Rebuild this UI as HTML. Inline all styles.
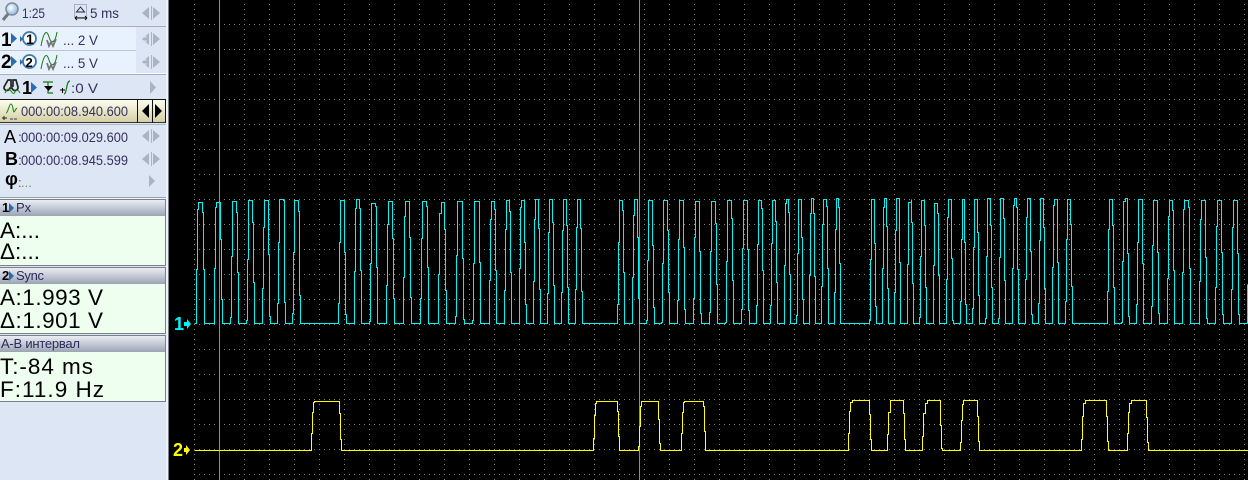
<!DOCTYPE html>
<html><head><meta charset="utf-8"><style>
html,body{margin:0;padding:0;background:#000;width:1248px;height:480px;overflow:hidden}
svg{display:block;font-family:"Liberation Sans",sans-serif}
.v{font-size:14px;fill:#35305f}
.h{font-size:13px;fill:#2d2a5a}
.m{font-size:22.500px;fill:#000}
</style></head><body>
<svg width="1248" height="480" viewBox="0 0 1248 480" xmlns="http://www.w3.org/2000/svg">
<defs>
<pattern id="gh" patternUnits="userSpaceOnUse" x="194" y="24" width="5" height="25"><rect width="1" height="1" fill="#858585"/></pattern>
<pattern id="gv" patternUnits="userSpaceOnUse" x="194" y="4" width="25" height="5"><rect width="1" height="1" fill="#858585"/></pattern>
<linearGradient id="hd" x1="0" y1="0" x2="0" y2="1"><stop offset="0" stop-color="#f0f2f8"/><stop offset="1" stop-color="#9ca4b4"/></linearGradient>
<linearGradient id="yl" x1="0" y1="0" x2="0" y2="1"><stop offset="0" stop-color="#fffff2"/><stop offset="1" stop-color="#d4d0a4"/></linearGradient>
<radialGradient id="gl" cx=".4" cy=".4" r=".7"><stop offset="0" stop-color="#ffffff"/><stop offset="1" stop-color="#7fb0e0"/></radialGradient>
</defs>
<rect width="1248" height="480" fill="#000"/>
<rect x="194" y="24" width="1054" height="456" fill="url(#gh)"/>
<rect x="194" y="4" width="1054" height="476" fill="url(#gv)"/>
<rect x="219" y="0" width="1" height="480" fill="#a89a00"/>
<rect x="639" y="0" width="1" height="480" fill="#a89a00"/>

<g transform="translate(.5 .5)" fill="none" shape-rendering="crispEdges" stroke-width="1">
<path stroke="#00f4f4" d="M194 323 H196 V269 H197 V209 H198 V202 H202 V212 H203 V269 H204 V323
H214 V268 H215 V207 H216 V202 H220 V239 H221 V299 H222 V323
H230 V317 H231 V256 H232 V201 H236 V212 H237 V272 H238 V323
H246 V320 H247 V259 H248 V200 H252 V222 H253 V282 H254 V323
H262 V288 H263 V227 H264 V200 H268 V254 H269 V316 H270 V323
H277 V303 H278 V242 H279 V199 H283 V200 H284 V302 H285 V323
H292 V313 H293 V252 H294 V200 H298 V211 H299 V295 H300 V323
H338 V303 H339 V242 H340 V200 H344 V252 H345 V314 H346 V323
H354 V271 H355 V208 H356 V199 H359 V208 H360 V270 H361 V323
H369 V321 H370 V263 H371 V203 H375 V206 H376 V267 H377 V323
H386 V285 H387 V224 H388 V201 H392 V238 H393 V298 H394 V323
H403 V277 H404 V216 H405 V201 H409 V237 H410 V297 H411 V323
H420 V298 H421 V238 H422 V201 H426 V206 H427 V267 H428 V323
H438 V274 H439 V213 H441 V202 H444 V229 H445 V290 H446 V323
H455 V316 H456 V255 H457 V201 H462 V258 H463 V319 H464 V323
H472 V320 H473 V263 H474 V201 H479 V262 H480 V323
H489 V280 H490 V219 H491 V201 H494 V209 H495 V270 H496 V323
H504 V290 H505 V229 H506 V200 H509 V211 H510 V272 H511 V323
H519 V268 H520 V207 H521 V200 H524 V242 H525 V304 H526 V323
H533 V281 H534 V219 H535 V199 H538 V228 H539 V289 H540 V323
H547 V293 H548 V232 H549 V199 H552 V222 H553 V285 H554 V323
H561 V292 H562 V230 H563 V199 H566 V225 H567 V287 H568 V323
H575 V289 H576 V227 H577 V199 H580 V228 H581 V291 H582 V323
H617 V304 H618 V242 H619 V200 H622 V210 H623 V272 H624 V323
H632 V277 H633 V215 H634 V199 H637 V237 H638 V298 H639 V323
H646 V320 H647 V260 H648 V200 H652 V245 H653 V307 H654 V323
H661 V322 H662 V263 H663 V200 H667 V230 H668 V292 H669 V323
H677 V300 H678 V239 H679 V200 H683 V247 H684 V309 H685 V323
H693 V298 H694 V237 H695 V201 H699 V251 H700 V313 H701 V323
H709 V312 H710 V251 H711 V201 H715 V223 H716 V284 H717 V323
H725 V322 H726 V261 H727 V200 H731 V218 H732 V280 H733 V323
H741 V309 H742 V248 H743 V200 H747 V249 H748 V310 H749 V323
H756 V305 H757 V244 H758 V200 H761 V208 H762 V270 H763 V323
H770 V305 H771 V243 H772 V200 H775 V221 H776 V282 H777 V323
H784 V265 H785 V203 H786 V199 H788 V212 H789 V274 H790 V323
H796 V315 H797 V253 H798 V199 H801 V237 H802 V299 H803 V323
H809 V275 H810 V213 H811 V198 H813 V213 H814 V276 H815 V323
H821 V286 H822 V224 H823 V199 H826 V206 H827 V268 H828 V323
H834 V292 H835 V229 H836 V198 H838 V207 H839 V263 H840 V323
H869 V320 H870 V259 H871 V199 H874 V243 H875 V306 H876 V323
H882 V268 H883 V207 H884 V198 H886 V226 H887 V288 H888 V323
H894 V292 H895 V230 H896 V198 H899 V262 H900 V323
H907 V264 H908 V202 H911 V199 V222 H912 V283 H913 V323
H919 V317 H920 V256 H921 V200 H924 V225 H925 V287 H926 V323
H933 V265 H934 V203 H937 V213 H938 V275 H939 V323
H946 V279 H947 V217 H948 V199 H951 V258 H952 V320 H953 V323
H960 V301 H961 V239 H962 V199 H964 V242 H965 V304 H966 V323
H972 V308 H973 V247 H974 V199 H977 V232 H978 V295 H979 V323
H985 V318 H986 V256 H987 V198 H990 V225 H991 V287 H992 V323
H998 V318 H999 V257 H1000 V198 H1003 V218 H1004 V280 H1005 V323
H1012 V268 H1013 V205 H1014 V198 H1016 V207 H1017 V269 H1018 V323
H1025 V279 H1026 V217 H1027 V198 H1030 V251 H1031 V314 H1032 V323
H1038 V303 H1039 V240 H1040 V198 H1043 V227 H1044 V288 H1045 V323
H1052 V267 H1053 V205 H1054 V199 H1057 V262 H1058 V323
H1065 V301 H1066 V239 H1067 V199 H1070 V224 H1071 V286 H1072 V323
H1107 V291 H1108 V229 H1109 V199 H1112 V225 H1113 V287 H1114 V323
H1121 V322 H1122 V261 H1123 V201 H1125 V198 H1127 V253 H1128 V316 H1129 V323
H1136 V304 H1137 V242 H1138 V199 H1142 V263 H1143 V323
H1151 V306 H1152 V245 H1153 V200 H1157 V252 H1158 V313 H1159 V323
H1167 V278 H1168 V216 H1169 V200 H1172 V210 H1173 V270 H1174 V323
H1182 V272 H1183 V209 H1184 V200 H1188 V207 H1189 V268 H1190 V323
H1199 V281 H1200 V219 H1201 V200 H1205 V257 H1206 V318 H1207 V323
H1215 V287 H1216 V226 H1217 V200 H1221 V252 H1222 V314 H1223 V323
H1231 V289 H1232 V227 H1233 V200 H1237 V253 H1238 V314 H1239 V323
H1247 V284"/>
<path stroke="#ffff00" d="M194 450 H311 V433 H312 V412 H313 V402 H314 V401 H339 V413 H340 V439 H341 V450
H593 V438 H594 V415 H595 V403 H596 V401 H617 V411 H618 V436 H619 V450
H638 V446 H639 V426 H640 V406 H641 V401 H658 V419 H659 V443 H660 V450
H681 V433 H682 V412 H683 V402 H684 V401 H703 V406 H704 V431 H705 V450
H848 V433 H849 V411 H850 V402 H852 V400 H869 V414 H870 V439 H871 V450
H887 V434 H888 V412 H890 V400 H903 V413 H904 V439 H905 V450
H922 V436 H923 V413 H925 V403 H927 V400 H940 V425 H941 V448 H942 V450
H960 V442 H961 V420 H962 V404 H963 V400 H977 V416 H978 V441 H979 V450
H1081 V439 H1082 V416 H1083 V403 H1085 V400 H1106 V416 H1107 V441 H1108 V450
H1127 V433 H1128 V412 H1129 V403 H1131 V400 H1146 V417 H1147 V442 H1148 V450 H1248"/>
</g>

<text x="174" y="330" font-size="18" font-weight="bold" fill="#00f4f4">1</text>
<path d="M184 322h3v-3l4 5-4 5v-3h-3z" fill="#00f4f4"/>
<text x="173" y="456" font-size="18" font-weight="bold" fill="#ffff00">2</text>
<path d="M184 448h2v-3l4 5-4 5v-3h-2z" fill="#ffff00"/>

<!-- panel -->
<rect x="0" y="0" width="166" height="480" fill="#dde6f4"/>
<rect x="166" y="0" width="2" height="480" fill="#eef2fa"/>
<rect x="168" y="0" width="1" height="480" fill="#7a7f88"/>

<!-- row 0 -->
<circle cx="12" cy="9" r="6" fill="url(#gl)" stroke="#7f8a99" stroke-width="1.500"/>
<path d="M8 14L3 20" stroke="#777" stroke-width="3"/>
<text x="22" y="18" class="v" textLength="23" lengthAdjust="spacingAndGlyphs">1:25</text>
<rect x="74.500" y="4.500" width="12" height="13" fill="none" stroke="#778" stroke-dasharray="1 1"/>
<path d="M80.500 7l4 5h-8z" fill="none" stroke="#223"/>
<path d="M75 18h12M75 18l2-2M75 18l2 2M87 18l-2-2M87 18l-2 2" stroke="#111" fill="none"/>
<text x="90" y="18" class="v" textLength="29" lengthAdjust="spacingAndGlyphs">5 ms</text>
<g fill="#aab3c2"><path d="M149 7v12l-7-6z"/><path d="M153 7v12l7-6z"/><rect x="151" y="6" width="1" height="14"/></g>

<rect x="0" y="26" width="166" height="1" fill="#a9aeb8"/>
<rect x="0" y="27" width="136" height="46" fill="#e8f2fe"/>
<rect x="0" y="50" width="136" height="1" fill="#bcc4d0"/>
<rect x="0" y="73" width="166" height="1" fill="#f4f7fc"/>
<rect x="0" y="74" width="166" height="1" fill="#aab0ba"/>

<!-- row 1 -->
<text x="1" y="46" font-size="19" fill="#000" font-weight="bold">1</text>
<path d="M11 33l6 5.500-6 5.500z" fill="#2a6cb0"/>
<path d="M20 36l3 3-3 3z" fill="#2a6cb0"/>
<circle cx="29.500" cy="38.500" r="6.500" fill="#fff" stroke="#3a78ac" stroke-width="1.800"/>
<text x="26" y="44" font-size="14" font-weight="bold" fill="#000">1</text>
<path d="M41 46C44 30 47 30 49 37S55 44 57 32" fill="none" stroke="#1b7a1b" stroke-width="1"/>
<path d="M47 40l2 6 2-4 2 4 3-7" fill="none" stroke="#777" stroke-width="1.800"/>
<text x="63" y="45" class="v" textLength="35" lengthAdjust="spacingAndGlyphs">... 2 V</text>
<g fill="#aab3c2"><path d="M149 33v12l-7-6z"/><path d="M153 33v12l7-6z"/><rect x="151" y="32" width="1" height="14"/></g>
<path d="M144 37h3M144 41h3" stroke="#dde6f4"/>

<!-- row 2 -->
<text x="1" y="68" font-size="19" fill="#000" font-weight="bold">2</text>
<path d="M11 56l6 5.500-6 5.500z" fill="#2a6cb0"/>
<path d="M20 59l3 3-3 3z" fill="#2a6cb0"/>
<circle cx="29.500" cy="61.500" r="6.500" fill="#fff" stroke="#3a78ac" stroke-width="1.800"/>
<text x="25.500" y="67" font-size="13" font-weight="bold" fill="#000">2</text>
<path d="M41 69C44 53 47 53 49 60S55 67 57 55" fill="none" stroke="#1b7a1b" stroke-width="1"/>
<path d="M47 63l2 6 2-4 2 4 3-7" fill="none" stroke="#777" stroke-width="1.800"/>
<text x="63" y="68" class="v" textLength="35" lengthAdjust="spacingAndGlyphs">... 5 V</text>
<g fill="#aab3c2"><path d="M149 56v12l-7-6z"/><path d="M153 56v12l7-6z"/><rect x="151" y="55" width="1" height="14"/></g>
<path d="M144 60h3M144 64h3" stroke="#dde6f4"/>

<!-- row 3 -->
<path d="M8 80h3v6h2v-6h3l2 7a3 3 0 0 1-6 1h-2a3 3 0 0 1-6-1z" fill="none" stroke="#222" stroke-width="1.700"/>
<path d="M5 93c3-5 4-5 6-2s3 3 4 1 3-3 5 1" fill="none" stroke="#1b8a1b" stroke-width="1.100"/>
<text x="22" y="94" font-size="18" font-weight="bold" fill="#000">1</text>
<path d="M31 82l6 5.500-6 5.500z" fill="#2a6cb0"/>
<path d="M43 82h10M48 82v11h5" fill="none" stroke="#127a12" stroke-width="1.200"/>
<path d="M44 86h9l-4.500 5z" fill="#000"/>
<path d="M60 90h5M62.500 88v5" stroke="#000"/>
<path d="M64 94c3 0 2-13 6-13" fill="none" stroke="#127a12" stroke-width="1.200"/>
<text x="71" y="93" class="v" textLength="27" lengthAdjust="spacingAndGlyphs">:0 V</text>
<path d="M150 81v13l6-6.500z" fill="#aab3c2"/>

<!-- row 4 -->
<rect x="0" y="99" width="166" height="23" fill="url(#yl)"/>
<rect x="0" y="99" width="166" height="1" fill="#111"/>
<rect x="0" y="122" width="166" height="1" fill="#333"/>
<rect x="137" y="99" width="1" height="24" fill="#111"/>
<rect x="152" y="99" width="1" height="24" fill="#111"/>
<rect x="165" y="99" width="1" height="24" fill="#111"/>
<path d="M6 113c2 0 3-9 5-9s2 8 3 8 1-3 3-4" fill="none" stroke="#1b8a1b" stroke-width="1.100"/>
<path d="M4 116v4M2 118h5" stroke="#222"/>
<rect x="10" y="118" width="3" height="2" fill="#888"/><rect x="14" y="118" width="3" height="2" fill="#888"/>
<text x="21" y="116" class="v" textLength="107" lengthAdjust="spacingAndGlyphs">000:00:08.940.600</text>
<path d="M149 104v14l-7-7z" fill="#000"/>
<path d="M155 104v14l7-7z" fill="#000"/>
<rect x="0" y="124" width="166" height="1" fill="#b2b8c2"/>

<!-- A B phi -->
<text x="4" y="143" font-size="18" fill="#000">A</text>
<text x="18" y="142" class="v">:</text>
<text x="21" y="142" class="v" textLength="107" lengthAdjust="spacingAndGlyphs">000:00:09.029.600</text>
<g fill="#aab3c2"><path d="M149 130v12l-7-6z"/><path d="M153 130v12l7-6z"/><rect x="151" y="129" width="1" height="14"/></g>
<text x="5" y="165" font-size="18" fill="#000" font-weight="bold">B</text>
<text x="18" y="165" class="v">:</text>
<text x="21" y="165" class="v" textLength="107" lengthAdjust="spacingAndGlyphs">000:00:08.945.599</text>
<g fill="#aab3c2"><path d="M149 153v12l-7-6z"/><path d="M153 153v12l7-6z"/><rect x="151" y="152" width="1" height="14"/></g>
<text x="5" y="185" font-size="18" font-weight="bold" fill="#000">φ</text>
<text x="18" y="187" font-size="13" fill="#556">:</text>
<text x="21" y="187" font-size="13" fill="#8a8a50">...</text>
<path d="M149 175v12l6-6z" fill="#aab3c2"/>

<rect x="0" y="197" width="166" height="1" fill="#9aa0aa"/>
<rect x="0" y="198" width="166" height="1" fill="#f4f7fc"/>

<!-- box 1 -->
<rect x="0" y="199" width="166" height="17" fill="url(#hd)"/>
<rect x="0" y="199" width="166" height="1" fill="#7a7f88"/>
<rect x="0" y="216" width="166" height="49" fill="#efffef"/>
<rect x="165" y="199" width="1" height="67" fill="#7a7f88"/>
<rect x="0" y="265" width="166" height="1" fill="#7a7f88"/>
<text x="2" y="212" font-size="13" font-weight="bold" fill="#000">1</text>
<path d="M9 203l5 5-5 5z" fill="#2a6cb0"/>
<text x="16" y="212" class="h">Px</text>
<text x="0" y="238" class="m">A:...</text>
<text x="0" y="259" class="m">Δ:...</text>

<!-- box 2 -->
<rect x="0" y="267" width="166" height="17" fill="url(#hd)"/>
<rect x="0" y="267" width="166" height="1" fill="#7a7f88"/>
<rect x="0" y="284" width="166" height="49" fill="#efffef"/>
<rect x="165" y="267" width="1" height="67" fill="#7a7f88"/>
<rect x="0" y="333" width="166" height="1" fill="#7a7f88"/>
<text x="2" y="280" font-size="13" font-weight="bold" fill="#000">2</text>
<path d="M9 271l5 5-5 5z" fill="#2a6cb0"/>
<text x="16" y="280" class="h" textLength="28">Sync</text>
<text x="0" y="305" class="m" textLength="103">A:1.993 V</text>
<text x="0" y="328" class="m" textLength="103">Δ:1.901 V</text>

<!-- box 3 -->
<rect x="0" y="335" width="166" height="17" fill="url(#hd)"/>
<rect x="0" y="335" width="166" height="1" fill="#7a7f88"/>
<rect x="0" y="352" width="166" height="49" fill="#efffef"/>
<rect x="165" y="335" width="1" height="67" fill="#7a7f88"/>
<rect x="0" y="401" width="166" height="1" fill="#7a7f88"/>
<text x="1" y="348" class="h" textLength="79">А-В интервал</text>
<text x="0" y="374" class="m" textLength="93">T:-84 ms</text>
<text x="0" y="397" class="m" textLength="104">F:11.9 Hz</text>
</svg>
</body></html>
